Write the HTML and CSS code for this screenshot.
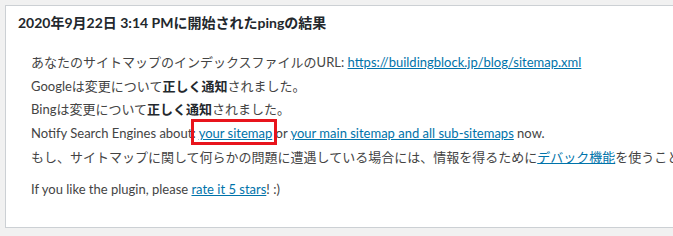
FILE: index.html
```html
<!DOCTYPE html>
<html lang="ja">
<head>
<meta charset="utf-8">
<link rel="stylesheet" href="styles.css">
</head>
<body>
<div class="wrap">
  <div class="postbox">
    <h2 class="hndle">2020年9月22日 3:14 PMに開始されたpingの結果</h2>
    <div class="inside">
      <ul class="results">
        <li>あなたのサイトマップのインデックスファイルのURL: <a href="#">https://buildingblock.jp/blog/sitemap.xml</a></li>
        <li>Googleは変更について<strong>正しく通知</strong>されました。</li>
        <li>Bingは変更について<strong>正しく通知</strong>されました。</li>
        <li>Notify Search Engines about: <span class="mark"><a href="#">your sitemap</a> </span>or <a href="#">your main sitemap and all sub-sitemaps</a> now.</li>
        <li>もし、サイトマップに関して何らかの問題に遭遇している場合には、情報を得るために<a href="#">デバック機能</a>を使うことができます。</li>
      </ul>
      <p class="rate">If you like the plugin, please <a href="#">rate it 5 stars</a>! :)</p>
    </div>
  </div>
</div>
</body>
</html>
```

FILE: styles.css
```css
html, body {
  margin: 0;
  padding: 0;
  background: #f1f1f1;
  overflow: hidden;
}
body {
  width: 673px;
  height: 236px;
  font-family: "Lato", "Noto Sans CJK JP", sans-serif;
  color: #444;
}
.wrap {
  padding: 5px 0 0 5px;
}
.postbox {
  width: 720px;
  height: 223px;
  background: #fff;
  border: 1px solid #ccd0d4;
  box-sizing: border-box;
}
.hndle {
  margin: 0;
  padding: 7px 12px 0 12px;
  font-size: 14px;
  line-height: 20px;
  font-weight: 700;
  color: #23282d;
}
.inside {
  padding: 18px 0 0 25px;
  font-size: 13px;
}
.results {
  list-style: none;
  margin: 0;
  padding: 0;
}
.results li {
  line-height: 23.7px;
  white-space: nowrap;
}
strong {
  font-weight: 700;
  color: #23282d;
}
a {
  color: #0073aa;
  text-decoration: underline;
}
.mark {
  position: relative;
}
.mark::after {
  content: "";
  position: absolute;
  left: -8px;
  top: -6px;
  width: 86px;
  height: 26px;
  border: 3px solid #e8141c;
  box-sizing: border-box;
}
.rate {
  margin: 8px 0 0 0;
  line-height: 23.7px;
}
```
